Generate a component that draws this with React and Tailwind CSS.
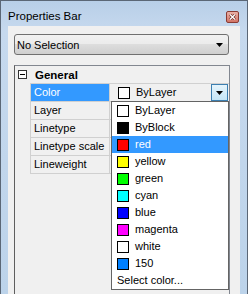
import React from 'react'

const colors = [
  { name: 'ByLayer', swatch: 'bg-white' },
  { name: 'ByBlock', swatch: 'bg-black' },
  { name: 'red', swatch: 'bg-[#ff0000]', active: true },
  { name: 'yellow', swatch: 'bg-[#ffff00]' },
  { name: 'green', swatch: 'bg-[#00ff00]' },
  { name: 'cyan', swatch: 'bg-[#00ffff]' },
  { name: 'blue', swatch: 'bg-[#0000ff]' },
  { name: 'magenta', swatch: 'bg-[#ff00ff]' },
  { name: 'white', swatch: 'bg-white' },
  { name: '150', swatch: 'bg-[#0080ff]' },
]

const rows = ['Color', 'Layer', 'Linetype', 'Linetype scale', 'Lineweight']

function Arrow() {
  return (
    <svg width="7" height="4" viewBox="0 0 7 4">
      <path d="M0 0h7L3.5 4z" fill="#000" />
    </svg>
  )
}

function CloseButton() {
  return (
    <div className="mt-[10px] w-[13px] h-[12px] rounded-[2px] border border-[#8a3b33] bg-[linear-gradient(#eab0a6,#d27466)] flex items-center justify-center">
      <svg width="7" height="6" viewBox="0 0 7 6">
        <path d="M1 0.5l5 5M6 0.5l-5 5" stroke="#6b2a24" strokeWidth="2.6" />
        <path d="M1 0.5l5 5M6 0.5l-5 5" stroke="#fff" strokeWidth="1.4" />
      </svg>
    </div>
  )
}

export default function App() {
  return (
    <div className="w-[248px] h-[294px] overflow-hidden flex flex-col border-t border-l border-r border-[#5b6776] bg-[linear-gradient(#b8cfe8,#c6d9ee_30px,#bcd3ea)] font-['Liberation_Sans',Arial,sans-serif] text-[11px] text-black">
      <div className="h-[25px] shrink-0 flex items-start justify-between pl-[7px] pr-[8px]">
        <span className="pt-[8px] text-[11.5px] leading-[14px]">Properties Bar</span>
        <CloseButton />
      </div>
      <div className="flex-1 mx-[7px] bg-[#f0f0f0] flex flex-col pt-[8px] pl-[6px] pr-[10px]">
        <div className="h-[21px] mr-[1px] rounded-[3px] border border-[#707070] bg-[linear-gradient(#f2f2f2,#ebebeb_50%,#dddddd_50%,#cfcfcf)] flex items-center justify-between pl-[2px] pr-[5px]">
          <span className="leading-[14px]">No Selection</span>
          <Arrow />
        </div>
        <div className="relative mt-[10px] flex-1 border-t border-r border-[#828790] border-l-[#5e5e5e]" style={{ borderLeftWidth: 1, borderLeftStyle: 'solid' }}>
          <div className="h-[17px] flex items-center">
            <div className="ml-[3px] w-[9px] h-[9px] border border-[#333] bg-white flex items-center justify-center">
              <div className="w-[5px] h-px bg-black" />
            </div>
            <span className="ml-[8px] font-bold text-[11.5px] leading-[14px]">General</span>
          </div>
          <div className="border-t border-[#d0d0d0] ml-[15px]">
            {rows.map((r, i) => (
              <div key={r} className="flex h-[18px] border-b border-[#d0d0d0]">
                <div className="w-[80px] border-l border-r border-[#d0d0d0] flex">
                  <div className={`flex-1 flex items-center pl-[3px] ${i === 0 ? 'bg-[#3399ff] text-white' : ''}`}>{r}</div>
                </div>
                <div className="flex-1 flex items-center">
                  {i === 0 && (
                    <>
                      <div className="ml-[8px] w-[12px] h-[12px] border border-black bg-white" />
                      <span className="ml-[6px] flex-1">ByLayer</span>
                      <div className="w-[17px] h-[17px] mr-px border border-[#3c7fb1] bg-[linear-gradient(#e5f4fc,#c4e5f6)] flex items-center justify-center">
                        <Arrow />
                      </div>
                    </>
                  )}
                </div>
              </div>
            ))}
          </div>
          <div className="absolute left-[96px] top-[35px] w-[118px] border border-[#646464] bg-white">
            {colors.map(c => (
              <div key={c.name} className={`h-[17px] flex items-center pl-[5px] ${c.active ? 'bg-[#3399ff] text-white' : ''}`}>
                <div className={`w-[12px] h-[12px] border border-black ${c.swatch}`} />
                <span className="ml-[6px]">{c.name}</span>
              </div>
            ))}
            <div className="h-[17px] flex items-center pl-[5px]">Select color...</div>
          </div>
        </div>
      </div>
    </div>
  )
}
